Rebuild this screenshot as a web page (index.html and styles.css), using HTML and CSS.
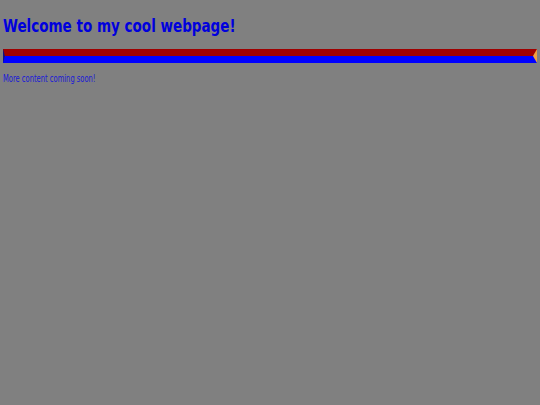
FILE: index.html
```html
<!DOCTYPE html>
<html>
<head>
<meta charset="utf-8">
<link rel="stylesheet" href="styles.css">
</head>
<body class="page">
<h1 class="title">Welcome to my cool webpage!</h1>
<hr class="rule">
<p class="note">More content coming soon!</p>
</body>
</html>
```
FILE: styles.css
```css
html, body { margin: 0; padding: 0; }
.page {
  background: #808080;
  padding: 3px;
  font-family: "DejaVu Sans Condensed", "DejaVu Sans", sans-serif;
  color: #0000dd;
}
.title {
  font-size: 18px;
  font-weight: bold;
  margin: 12px 0 12px 0;
  line-height: 22px;
  transform: scaleX(0.835);
  transform-origin: left center;
  white-space: nowrap;
}
.rule {
  height: 0;
  margin: 0;
  border-style: solid;
  border-width: 7px 4px 7px 2px;
  border-color: #a00000 #f0a040 #0000ff #101080;
}
.note {
  font-size: 10px;
  margin: 9px 0 0 0;
  line-height: 13px;
  color: #1818d8;
  transform: scaleX(0.75);
  transform-origin: left center;
  white-space: nowrap;
}
```
